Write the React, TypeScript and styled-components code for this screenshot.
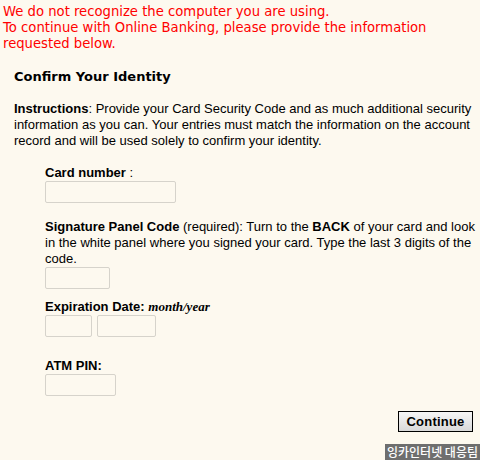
import styled, { createGlobalStyle } from "styled-components";

const GlobalStyle = createGlobalStyle`
  html, body {
    margin: 0;
    padding: 0;
    background: #fdf9ef;
  }
  body {
    width: 480px;
    height: 460px;
    overflow: hidden;
  }
`;

const Page = styled.div`
  position: relative;
  width: 480px;
  height: 460px;
  background: #fdf9ef;
  font-family: "Liberation Sans", Arial, sans-serif;
  font-size: 13px;
  color: #000;
`;

const Alert = styled.p`
  margin: 0;
  padding: 4px 0 0 3px;
  color: #ff0000;
  font-family: "DejaVu Sans", Verdana, sans-serif;
  font-size: 13.2px;
  line-height: 16px;
`;

const Section = styled.div`
  padding: 17px 0 0 14px;
`;

const Heading = styled.h3`
  margin: 0 0 16px;
  font-family: "DejaVu Sans", Verdana, sans-serif;
  font-size: 13px;
  font-weight: bold;
  line-height: 16px;
`;

const Instructions = styled.p`
  margin: 0;
  padding-right: 4px;
  line-height: 16px;
`;

const Fields = styled.div`
  display: flex;
  flex-direction: column;
  padding-left: 31px;
`;

const Field = styled.div<{ $top: number }>`
  display: flex;
  flex-direction: column;
  margin-top: ${(p) => p.$top}px;
  line-height: 16px;
`;

const Strong = styled.b`
  font-weight: bold;
`;

const Hint = styled.i`
  font-family: "Liberation Serif", "Times New Roman", serif;
  font-size: 13px;
  font-weight: bold;
`;

const Row = styled.div`
  display: flex;
  gap: 5px;
`;

const Input = styled.input<{ $w: number }>`
  box-sizing: border-box;
  width: ${(p) => p.$w}px;
  height: 22px;
  margin: 0;
  border: 1px solid #d6d3cb;
  border-radius: 2px;
  background: #fdf9ef;
  outline: none;
`;

const Actions = styled.div`
  display: flex;
  justify-content: flex-end;
  padding: 15px 7px 0 0;
`;

const Button = styled.button`
  width: 75px;
  height: 21px;
  padding: 0;
  border: 1px solid #000;
  background: linear-gradient(#f6f6f6, #d9d9d9);
  font-family: "Liberation Sans", Arial, sans-serif;
  font-size: 13px;
  font-weight: bold;
  letter-spacing: 0.2px;
  color: #000;
`;

const Badge = styled.div`
  position: absolute;
  right: 0;
  bottom: 0;
  padding: 0 2px;
  background: #6e6e6e;
  color: #fff;
  font-family: "Noto Sans CJK KR", sans-serif;
  font-size: 12px;
  font-weight: 500;
  line-height: 16px;
`;

export default function App() {
  return (
    <Page>
      <GlobalStyle />
      <Alert>
        We do not recognize the computer you are using.
        <br />
        To continue with Online Banking, please provide the information requested below.
      </Alert>
      <Section>
        <Heading>Confirm Your Identity</Heading>
        <Instructions>
          <Strong>Instructions</Strong>: Provide your Card Security Code and as much additional
          security information as you can. Your entries must match the information on the account
          record and will be used solely to confirm your identity.
        </Instructions>
        <Fields>
          <Field $top={16}>
            <div>
              <Strong>Card number</Strong> :
            </div>
            <Input $w={131} />
          </Field>
          <Field $top={16}>
            <div>
              <Strong>Signature Panel Code</Strong> (required): Turn to the <Strong>BACK</Strong> of
              your card and look in the white panel where you signed your card. Type the last 3
              digits of the code.
            </div>
            <Input $w={65} />
          </Field>
          <Field $top={10}>
            <div>
              <Strong>Expiration Date:</Strong> <Hint>month/year</Hint>
            </div>
            <Row>
              <Input $w={47} />
              <Input $w={59} />
            </Row>
          </Field>
          <Field $top={21}>
            <div>
              <Strong>ATM PIN:</Strong>
            </div>
            <Input $w={71} />
          </Field>
        </Fields>
        <Actions>
          <Button type="button">Continue</Button>
        </Actions>
      </Section>
      <Badge>잉카인터넷 대응팀</Badge>
    </Page>
  );
}
